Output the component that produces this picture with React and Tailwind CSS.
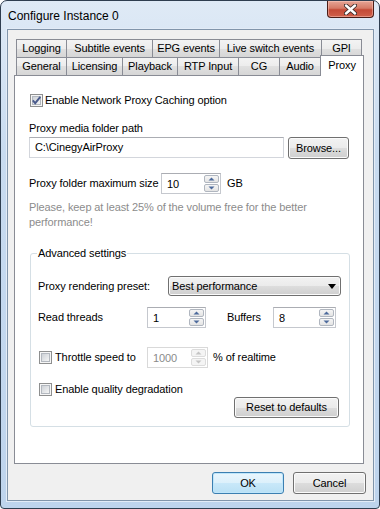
import React from "react";

const BTN =
  "rounded-[3px] border border-[#707070] bg-[linear-gradient(#f2f2f2,#ebebeb_50%,#dddddd_50%,#cfcfcf)] shadow-[inset_0_0_0_1px_#fbfbfb] flex items-center justify-center text-black";

function Check({ checked }) {
  return (
    <svg width="13" height="13" viewBox="0 0 13 13" className="shrink-0">
      <defs>
        <linearGradient id={checked ? "cbA" : "cbB"} x1="0" y1="0" x2="1" y2="1">
          <stop offset="0" stopColor="#cbcfd5" />
          <stop offset="1" stopColor="#f7f7f7" />
        </linearGradient>
      </defs>
      <rect x="0.5" y="0.5" width="12" height="12" fill="#f6f6f6" stroke="#8e8f8f" />
      <rect x="2.5" y="2.5" width="8" height="8" fill={`url(#${checked ? "cbA" : "cbB"})`} stroke="#b3b8bf" />
      {checked && (
        <path d="M2.8 6.4 L5.2 9.2 L10.3 2.8" stroke="#4a5b8c" strokeWidth="1.9" fill="none" />
      )}
    </svg>
  );
}

function Arrow({ up, disabled }) {
  return (
    <svg width="7" height="4" viewBox="0 0 7 4">
      <path
        d={up ? "M0.5 3.5 L3.5 0.5 L6.5 3.5 Z" : "M0.5 0.5 L3.5 3.5 L6.5 0.5 Z"}
        fill={disabled ? "#c4c4c4" : "#4d6a9c"}
      />
    </svg>
  );
}

function SpinBtn({ up, disabled }) {
  return (
    <div
      className={
        "flex-1 flex items-center justify-center rounded-[2px] border " +
        (disabled
          ? "border-[#dcdcdc] bg-[#f4f4f4]"
          : "border-[#b0b6bf] bg-[linear-gradient(#f5f5f5,#e4e4e4)]")
      }
    >
      <Arrow up={up} disabled={disabled} />
    </div>
  );
}

function Spin({ value, w, disabled }) {
  return (
    <div
      className={
        "flex h-[21px] bg-white border " +
        w +
        (disabled
          ? " border-[#d9d9d9] text-[#8a8a8a]"
          : " border-[#c5c8ce] border-t-[#abadb3] text-black")
      }
    >
      <div className="flex-1 pl-[5px] flex items-center leading-[14px]">{value}</div>
      <div className="w-[16px] flex flex-col gap-px py-px pr-px">
        <SpinBtn up disabled={disabled} />
        <SpinBtn disabled={disabled} />
      </div>
    </div>
  );
}

function Tab({ label, w, last }) {
  return (
    <div
      className={
        "h-full flex items-center justify-center border-t border-l border-[#898c95] bg-[linear-gradient(#f3f3f3,#ececec_50%,#e0e0e0_50%,#d6d6d6)] " +
        w +
        (last ? " border-r" : "")
      }
    >
      {label}
    </div>
  );
}

export default function App() {
  return (
    <div className="w-[380px] h-[509px] overflow-hidden whitespace-nowrap tracking-[-0.1px] font-['Liberation_Sans',Arial,sans-serif] text-[11px] text-black">
      <div className="w-[380px] h-[509px] rounded-t-[7px] rounded-b-[4px] border border-[#2f3e50] bg-[linear-gradient(#dfeaf6,#c8dbf0_30%,#bed4ed)] flex flex-col pl-[6px] pr-[5px] pb-[7px]">
        {/* Title bar */}
        <div className="h-[28px] flex justify-between">
          <div className="pt-[8px] pl-px text-[12px] leading-[14px] tracking-normal text-black">Configure Instance 0</div>
          <div className="w-[47px] h-[17px] rounded-b-[4px] border border-t-0 border-[#4a1d17] bg-[linear-gradient(#e6a596,#d57a66_45%,#c44a36_55%,#d0604a)] shadow-[inset_0_0_0_1px_rgba(255,210,200,0.45)] flex items-center justify-center">
            <svg width="13" height="11" viewBox="0 0 13 11">
              <path d="M2 1.5 L11 9.5 M11 1.5 L2 9.5" stroke="#3a2a28" strokeWidth="4.2" strokeLinecap="round" />
              <path d="M2 1.5 L11 9.5 M11 1.5 L2 9.5" stroke="#ffffff" strokeWidth="2.4" strokeLinecap="round" />
            </svg>
          </div>
        </div>

        {/* Client area */}
        <div className="h-[472px] border border-[#8195ab] bg-[#f0f0f0] shadow-[0_0_0_1px_#e3ecf7] flex flex-col pt-[9px] pl-[6px]">
          {/* Tabs */}
          <div className="w-[350px] h-[36px] flex flex-col">
            <div className="h-[18px] flex pl-[2px]">
              <Tab label="Logging" w="w-[50px]" />
              <Tab label="Subtitle events" w="w-[86px]" />
              <Tab label="EPG events" w="w-[67px]" />
              <Tab label="Live switch events" w="w-[102px]" />
              <Tab label="GPI" w="w-[41px]" last />
            </div>
            <div className="h-[18px] flex pl-[2px]">
              <Tab label="General" w="w-[50px]" />
              <Tab label="Licensing" w="w-[56px]" />
              <Tab label="Playback" w="w-[55px]" />
              <Tab label="RTP Input" w="w-[61px]" />
              <Tab label="CG" w="w-[41px]" />
              <Tab label="Audio" w="w-[41px]" />
              <div className="relative z-10 -mt-[2px] h-[21px] w-[44px] border border-b-0 border-[#898c95] bg-white flex items-center justify-center pb-[1px]">
                Proxy
              </div>
            </div>
          </div>

          {/* Panel */}
          <div className="w-[350px] h-[389px] border border-[#898c95] bg-white flex flex-col pl-[14px]">
            <div className="mt-[18px] h-[13px] flex items-center gap-[2px] ml-px">
              <Check checked />
              <span className="leading-[13px]">Enable Network Proxy Caching option</span>
            </div>

            <div className="mt-[14px] h-[14px] leading-[14px]">Proxy media folder path</div>

            <div className="mt-[2px] flex items-start gap-[4px] h-[22px]">
              <div className="w-[255px] h-[21px] border border-[#d3d6dc] border-t-[#abadb3] bg-white flex items-center pl-[5px]">
                C:\CinegyAirProxy
              </div>
              <div className={BTN + " w-[61px] h-[22px]"}>Browse...</div>
            </div>

            <div className="mt-[14px] h-[21px] flex items-center">
              <div className="w-[132px]">Proxy folder maximum size</div>
              <Spin value="10" w="w-[60px]" />
              <div className="ml-[6px]">GB</div>
            </div>

            <div className="mt-[6px] leading-[15px] text-[#8c8c8c] w-[320px] whitespace-normal">
              Please, keep at least 25% of the volume free for the better performance!
            </div>

            {/* Group box */}
            <div className="relative mt-[23px] ml-px w-[320px] h-[174px] rounded-[3px] border border-[#d5dfe5] flex flex-col pl-[7px]">
              <span className="absolute left-[6px] -top-[8px] px-px bg-white leading-[14px]">Advanced settings</span>

              <div className="mt-[22px] h-[20px] flex items-center">
                <div className="w-[130px]">Proxy rendering preset:</div>
                <div className={BTN + " w-[173px] h-[20px] !justify-between pl-[3px] pr-[4px]"}>
                  <span>Best performance</span>
                  <svg width="8" height="5" viewBox="0 0 8 5">
                    <path d="M0 0 L8 0 L4 5 Z" fill="#000" />
                  </svg>
                </div>
              </div>

              <div className="mt-[11px] h-[21px] flex items-center">
                <div className="w-[109px]">Read threads</div>
                <Spin value="1" w="w-[59px]" />
                <div className="ml-[21px] w-[46px]">Buffers</div>
                <Spin value="8" w="w-[63px]" />
              </div>

              <div className="mt-[19px] h-[21px] flex items-center">
                <div className="w-[109px] flex items-center gap-[3px] pl-px">
                  <Check />
                  <span>Throttle speed to</span>
                </div>
                <Spin value="1000" w="w-[61px]" disabled />
                <div className="ml-[5px]">% of realtime</div>
              </div>

              <div className="mt-[15px] h-[13px] flex items-center gap-[3px] pl-px">
                <Check />
                <span>Enable quality degradation</span>
              </div>

              <div className="mt-px self-end mr-[10px]">
                <div className={BTN + " w-[105px] h-[21px]"}>Reset to defaults</div>
              </div>
            </div>
          </div>

          {/* Bottom buttons */}
          <div className="mt-[8px] flex justify-end gap-[9px] pr-[7px]">
            <div className="w-[72px] h-[22px] rounded-[3px] border border-[#3c7fb1] bg-[linear-gradient(#eaf6fd,#dcf0fb_50%,#c9e8f9_50%,#b9e0f5)] shadow-[inset_0_0_0_1px_#bfe6fb] flex items-center justify-center">
              OK
            </div>
            <div className={BTN + " w-[73px] h-[22px]"}>Cancel</div>
          </div>
        </div>
      </div>
    </div>
  );
}
